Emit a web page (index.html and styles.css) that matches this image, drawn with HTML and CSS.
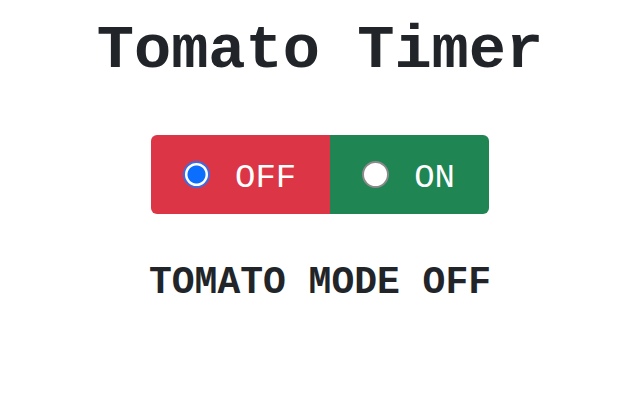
FILE: index.html
```html
<!DOCTYPE html>
<html lang="en">
<head>
  <meta charset="UTF-8">
  <title>Tomato Timer</title>
  <link rel="stylesheet" href="styles.css">
</head>
<body>

<div class="container">
  <h1>Tomato Timer</h1>

  <div class="switch">
    <label class="option off">
      <input type="radio" name="mode" value="off" checked onchange="setMode(this.value)">
      <span>OFF</span>
    </label>
    <label class="option on">
      <input type="radio" name="mode" value="on" onchange="setMode(this.value)">
      <span>ON</span>
    </label>
  </div>

  <h4 id="status">TOMATO MODE OFF</h4>
</div>

<script>
  function setMode(mode) {
    document.getElementById("status").textContent = "TOMATO MODE " + mode.toUpperCase();
  }
</script>

</body>
</html>
```
FILE: styles.css
```css
body {
  margin: 0;
  font-family: 'Courier New', 'Nimbus Mono PS', FreeMono, 'Liberation Mono', monospace;
  background-color: #fff;
  color: #212529;
}

.container {
  display: flex;
  flex-direction: column;
  align-items: center;
  padding-top: 15px;
}

h1 {
  margin: 0;
  font-size: 62px;
  font-weight: bold;
  line-height: 72px;
}

.switch {
  display: flex;
  margin-top: 48px;
  border-radius: 6px;
  overflow: hidden;
}

.option {
  display: flex;
  align-items: center;
  gap: 25px;
  height: 79px;
  padding: 0 34px 0 32px;
  color: #fff;
  font-size: 34px;
  cursor: pointer;
}

.option span {
  margin-top: 6px;
}

.off {
  background: #dc3545;
}

.on {
  background: #1e8553;
}

input[type="radio"] {
  appearance: none;
  margin: 0;
  width: 27px;
  height: 27px;
  border-radius: 50%;
  background: #fff;
  border: 2px solid #8a8a8a;
  cursor: pointer;
}

input[type="radio"]:checked {
  border: 2px solid #3d6be0;
  background: radial-gradient(circle, #0b6efd 0 8.5px, #fff 9.5px);
}

h4 {
  margin: 47px 0 0;
  font-size: 38px;
  font-weight: bold;
  line-height: 44px;
}
```
